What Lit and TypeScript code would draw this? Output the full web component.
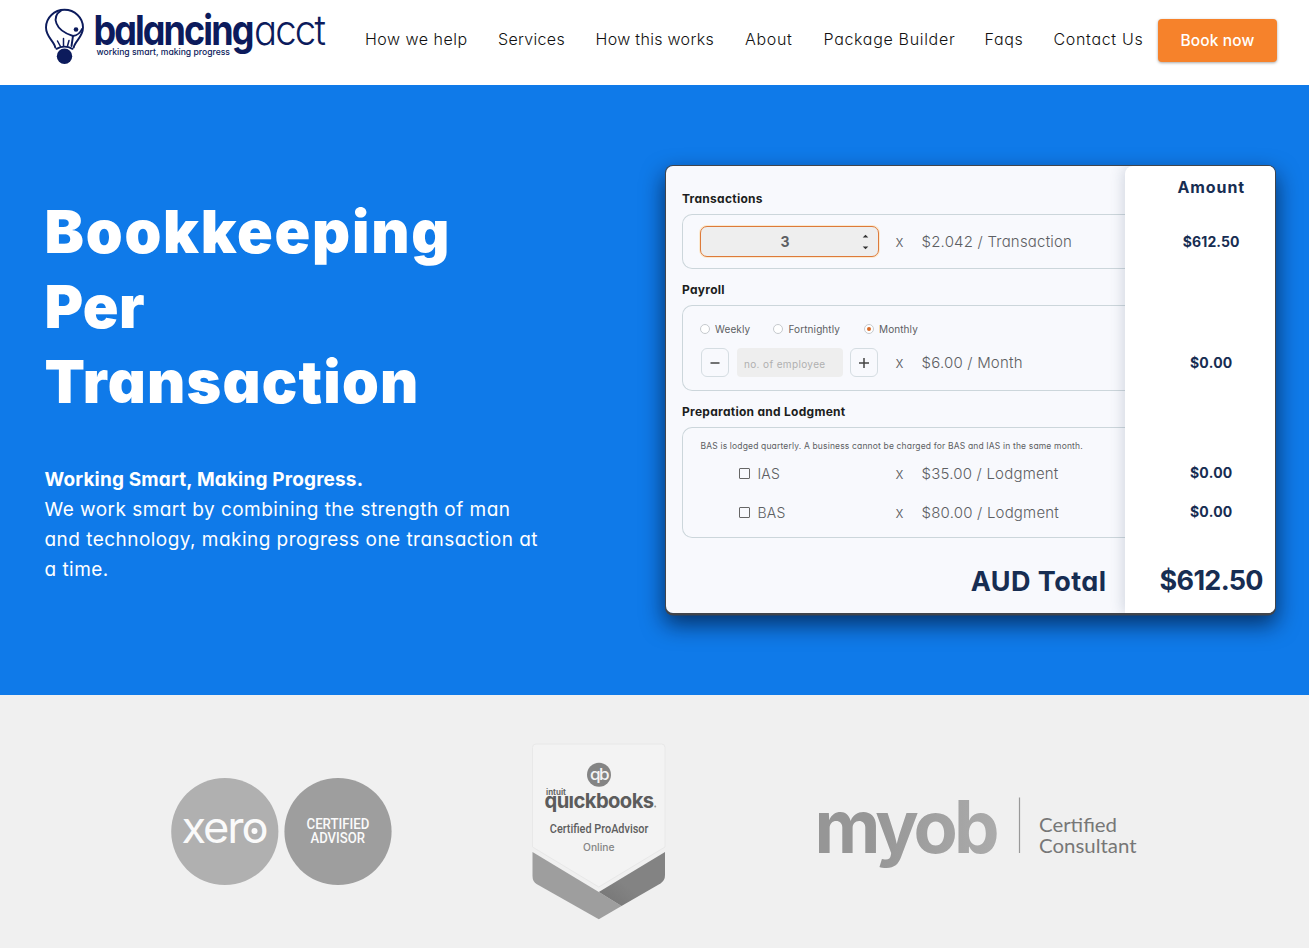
import { LitElement, html, css } from "lit";
import { customElement } from "lit/decorators.js";

@customElement("site-header")
export class SiteHeader extends LitElement {
  static styles = css`
    :host { display: block; height: 85px; background: #fff; }
    .bar { display: flex; align-items: flex-start; height: 85px; padding: 0 32px 0 40px; box-sizing: border-box; }
    .logo { display: block; width: 290px; height: 70px; flex: none; overflow: visible; }
    nav { display: grid; grid-template-columns: 103px 67.5px 119.5px 48.5px 131px 39px 90px; column-gap: 30px; margin: 24px 14.5px 0 35px; }
    a { font-size: 16px; line-height: 31px; font-weight: 330; letter-spacing: 0.5px; color: #111; white-space: nowrap; text-decoration: none; }
    .tight { letter-spacing: 0.31px; }
    .wide { letter-spacing: 0.68px; }
    .book { flex: none; width: 119px; height: 43px; margin-top: 19px; border: 0; padding: 0; border-radius: 4px; background: #f6822b; color: #fff; font: 500 15.5px/43px Inter, sans-serif; letter-spacing: 0.15px; box-shadow: 0 1px 3px rgba(0,0,0,.35); font-feature-settings: inherit; }
  `;
  render() {
    return html`
      <div class="bar">
        <svg class="logo" viewBox="40 0 290 70" font-family="Inter" fill="#0c1b5c">
          <g fill="none" stroke="#0c1b5c" stroke-width="1.9" stroke-linecap="round" stroke-linejoin="round">
            <path d="M55.300 47.500C54 41 46 37 46 27.500A18.500 17.700 0 0 1 83 27.500C83 37 75 41 73.700 47.500"/>
            <path d="M61.500 10.300C56.500 13.500 54.500 18.500 56.500 23.500C59 30 65 33.500 73 36L71.500 46"/>
            <path d="M73 36C77 35.500 80.500 32.500 82 29"/>
            <path d="M57.500 41L60.500 46.500M63.500 38.500V46M69 40.500L67.500 46" stroke-width="1.500"/>
            <path d="M56.500 48.800Q64.500 44.500 72.500 48.800"/>
          </g>
          <circle cx="76" cy="29.500" r="2.300"/>
          <circle cx="64.500" cy="56.300" r="7.700"/>
          <text x="93.500" y="45" font-size="41" font-weight="750" letter-spacing="-2.200" textLength="159" lengthAdjust="spacingAndGlyphs">balancing</text>
          <text x="254" y="45" font-size="41" font-weight="300" letter-spacing="-2" textLength="70" lengthAdjust="spacingAndGlyphs">acct</text>
          <text x="96.500" y="54.800" font-size="9" font-weight="550" textLength="133.500" lengthAdjust="spacingAndGlyphs">working smart, making progress</text>
        </svg>
        <nav>
          <a>How we help</a><a class="tight">Services</a><a class="tight">How this works</a><a class="wide">About</a><a class="wide">Package Builder</a><a class="wide">Faqs</a><a class="wide">Contact Us</a>
        </nav>
        <button class="book">Book now</button>
      </div>`;
  }
}

@customElement("price-card")
export class PriceCard extends LitElement {
  static styles = css`
    :host { display: block; }
    * { box-sizing: border-box; }
    .card { display: grid; grid-template-columns: 459px 150px; width: 609px; height: 447px; border-radius: 7px; background: #f8f9fd; overflow: hidden; color: #5d5f63; }
    .frame { width: 609px; border-radius: 7px; box-shadow: 0 0 0 1px #41454c, 0 1.500px 0 1px #41454c, 0 10px 22px 2px rgba(0,10,30,.62); }
    .left { padding: 25px 0 0 16px; }
    h3 { margin: 0 0 7px; padding-left: 0.500px; font-size: 12px; line-height: 16px; font-weight: 700; letter-spacing: 0.28px; color: #1c1d20; }
    .box { border: 1px solid #ccd6db; border-right: 0; border-radius: 10px 0 0 10px; margin-bottom: 13px; padding: 0 0 0 17px; }
    .b1 { height: 55px; padding-top: 11px; }
    .b2 { height: 86px; padding-top: 15px; }
    .b3 { height: 111px; padding-top: 11px; margin-bottom: 0; }
    .row { display: grid; grid-template-columns: 196px 26px 1fr; align-items: center; font-size: 15px; font-weight: 300; letter-spacing: 0.2px; white-space: nowrap; }
    .field { position: relative; display: grid; place-items: center; width: 179px; height: 31px; padding-right: 8px; border: 1.500px solid #dd7a3a; border-radius: 7px; background: #eee; font-size: 14px; font-weight: 700; box-shadow: 0 0 0 1px #fbe9cf; }
    .spin { position: absolute; right: 9px; top: 7px; width: 7px; height: 16px; }
    .radios { display: flex; align-items: center; height: 16px; font-size: 10px; font-weight: 400; letter-spacing: 0.100px; }
    .radio { display: flex; align-items: center; gap: 5.500px; white-space: nowrap; }
    .dot { width: 10px; height: 10px; border: 1px solid #c6cace; border-radius: 50%; display: grid; place-items: center; background: #fff; }
    .on::after { content: ""; width: 4px; height: 4px; border-radius: 50%; background: #d86a28; }
    .r1 { width: 73.500px; } .r2 { width: 90.500px; }
    .b2 .row { margin-top: 11px; height: 29px; }
    .step { display: flex; gap: 7px; padding-left: 1px; }
    .btn { width: 28px; height: 29px; border: 1px solid #d5dde2; border-radius: 6px; display: grid; place-items: center; }
    .btn svg { width: 10px; height: 10px; }
    .emp { width: 106px; height: 29px; border-radius: 4px; background: #eee; color: #b0b0b0; font-size: 10px; line-height: 32px; padding-left: 7.500px; letter-spacing: 0.36px; margin-left: 1px; font-weight: 400; }
    .note { font-size: 8.500px; line-height: 14px; letter-spacing: 0.16px; padding-left: 1px; white-space: nowrap; font-weight: 400; }
    .b3 .row { height: 38px; }
    .b3 .note + .row { height: 40px; }
    .check { display: flex; align-items: center; gap: 8px; padding-left: 39px; font-size: 14px; }
    .sq { width: 11px; height: 11px; border: 1.500px solid #666; border-radius: 1px; }
    .total { text-align: right; margin: 24px 18px 0 0; font-size: 27px; line-height: 40px; font-weight: 750; letter-spacing: 0.450px; color: #172d52; }
    .right { background: #fff; border-radius: 8px 0 0 0; box-shadow: -2px 0 14px rgba(60,80,110,.2); text-align: center; padding: 0 0 0 23.500px; color: #172d52; font-size: 14px; font-weight: 750; letter-spacing: 0.1px; }
    .head { font-size: 16px; line-height: 43px; letter-spacing: 0.900px; }
    .a1 { line-height: 66px; } .a2 { line-height: 176px; } .a3 { line-height: 44px; } .a4 { line-height: 34px; }
    .zero { letter-spacing: 0.250px; }
    .sum { font-size: 27px; line-height: 40px; margin-top: 32px; letter-spacing: -0.700px; }
  `;
  private lodgment(name: string, price: string) {
    return html`<div class="row"><span class="check"><i class="sq"></i>${name}</span><span>x</span><span>${price} / Lodgment</span></div>`;
  }
  render() {
    return html`<div class="frame"><div class="card">
      <div class="left">
        <h3>Transactions</h3>
        <div class="box b1"><div class="row">
          <div class="field">3<svg class="spin" viewBox="0 0 7 16" fill="#333"><path d="M.7 3.500 3.500.8 6.300 3.500zM.7 12.500 3.500 15.200 6.300 12.500z"/></svg></div>
          <span>x</span><span>$2.042 / Transaction</span></div></div>
        <h3>Payroll</h3>
        <div class="box b2">
          <div class="radios">
            <span class="radio r1"><i class="dot"></i>Weekly</span><span class="radio r2"><i class="dot"></i>Fortnightly</span><span class="radio"><i class="dot on"></i>Monthly</span>
          </div>
          <div class="row">
            <div class="step">
              <span class="btn"><svg viewBox="0 0 10 10" stroke="#444" stroke-width="1.500"><path d="M0.500 5h9"/></svg></span>
              <span class="emp">no. of employee</span>
              <span class="btn"><svg viewBox="0 0 10 10" stroke="#444" stroke-width="1.500"><path d="M0 5h10M5 0v10"/></svg></span>
            </div>
            <span>x</span><span>$6.00 / Month</span></div>
        </div>
        <h3>Preparation and Lodgment</h3>
        <div class="box b3">
          <div class="note">BAS is lodged quarterly. A business cannot be charged for BAS and IAS in the same month.</div>
          ${this.lodgment("IAS", "$35.00")}${this.lodgment("BAS", "$80.00")}
        </div>
        <div class="total">AUD Total</div>
      </div>
      <div class="right">
        <div class="head">Amount</div>
        <div class="a1">$612.50</div>
        <div class="a2 zero">$0.00</div>
        <div class="a3 zero">$0.00</div>
        <div class="a4 zero">$0.00</div>
        <div class="sum">$612.50</div>
      </div>
    </div></div>`;
  }
}

@customElement("partner-logos")
export class PartnerLogos extends LitElement {
  static styles = css`
    :host { display: block; height: 253px; background: #f0f0f0; }
    .row { display: flex; align-items: flex-start; padding-left: 170px; }
    svg { display: block; flex: none; overflow: visible; }
    .xero { width: 224px; height: 110px; margin-top: 82px; }
    .qb { width: 136px; height: 180px; margin: 47px 0 0 137px; }
    .myob { width: 330px; height: 110px; margin: 85px 0 0 143px; }
  `;
  render() {
    return html`<div class="row">
      <svg class="xero" viewBox="170 777 224 110" fill="#fafafa">
        <circle cx="224.800" cy="831.500" r="53.600" fill="#b0b0b0"/>
        <circle cx="338" cy="831.500" r="53.600" fill="#9e9e9e"/>
        <text x="181.500" y="842.500" font-family="Inter" font-weight="430" font-size="43" letter-spacing="-2" textLength="85" lengthAdjust="spacingAndGlyphs">xero</text>
        <circle cx="254.500" cy="831" r="3"/>
        <g font-family="Roboto" font-weight="500" font-size="14">
          <text x="306.500" y="829.400" textLength="63" lengthAdjust="spacingAndGlyphs">CERTIFIED</text>
          <text x="310.500" y="843.400" textLength="54.500" lengthAdjust="spacingAndGlyphs">ADVISOR</text>
        </g>
      </svg>
      <svg class="qb" viewBox="531 742 136 180">
        <defs><linearGradient id="fold" x1="0" x2="1" y1="1" y2="0"><stop offset="0" stop-color="#747474"/><stop offset=".4" stop-color="#838383"/></linearGradient></defs>
        <path d="M532.500 747.500Q532.500 744 536 744H661.500Q665 744 665 747.500V847L598.800 887 532.500 847Z" fill="#f3f3f3" stroke="#e8e8e8" stroke-width="1"/>
        <path d="M532.500 852 598.800 892 621.500 906 598.800 919.300 536.500 884Q532.500 881.500 532.500 876Z" fill="#9e9e9e"/>
        <path d="M665 852 598.800 892 621.500 906 660.500 883.500Q665 880.500 665 875Z" fill="url(#fold)"/>
        <circle cx="599" cy="774.700" r="12" fill="#848484"/>
        <text x="590" y="779.500" font-family="Inter" font-size="16" font-weight="500" fill="#f3f3f3" textLength="18" letter-spacing="-1.500" lengthAdjust="spacingAndGlyphs">qb</text>
        <text x="544.500" y="807.500" font-family="Inter" font-size="20.500" font-weight="700" fill="#5c5c5c" letter-spacing="-.6" textLength="109" lengthAdjust="spacingAndGlyphs">quickbooks</text>
        <path d="M567.500 789h6.500v6.300h-6.500z" fill="#f3f3f3"/>
        <text x="546" y="794.500" font-family="Inter" font-size="7.500" font-weight="700" fill="#666" textLength="20" lengthAdjust="spacingAndGlyphs">intuit</text>
        <circle cx="655.200" cy="806.500" r="1" fill="#999"/>
        <text x="549.800" y="832.700" font-family="Roboto" font-size="12.300" font-weight="500" fill="#5e5e5e" textLength="98.500" lengthAdjust="spacingAndGlyphs">Certified ProAdvisor</text>
        <text x="583" y="850.700" font-family="Inter" font-size="10" font-weight="500" fill="#858585" textLength="31.500" lengthAdjust="spacingAndGlyphs">Online</text>
      </svg>
      <svg class="myob" viewBox="810 780 330 110">
        <defs><linearGradient id="tone" x1="0" x2="1"><stop offset=".3" stop-color="#969696"/><stop offset="1" stop-color="#ababab"/></linearGradient></defs>
        <text x="814.500" y="853" font-family="Inter" font-size="73" font-weight="750" fill="url(#tone)" letter-spacing="-4" textLength="181" lengthAdjust="spacingAndGlyphs">myob</text>
        <path d="M1019.500 797.500V853" stroke="#999" stroke-width="1.200"/>
        <g font-family="Lato" font-size="19.500" fill="#777">
          <text x="1039" y="832" textLength="78" lengthAdjust="spacingAndGlyphs">Certified</text>
          <text x="1039" y="853" textLength="97.500" lengthAdjust="spacingAndGlyphs">Consultant</text>
        </g>
      </svg>
    </div>`;
  }
}

@customElement("app-root")
export class AppRoot extends LitElement {
  static styles = css`
    :host { display: block; width: 1309px; height: 948px; overflow: hidden; font-family: Inter, sans-serif; font-feature-settings: "cv11"; }
    .hero { display: flex; height: 610px; background: #0f7ae9; color: #fff; }
    .copy { width: 621px; padding: 109px 0 0 44.500px; flex: none; }
    h1 { margin: 0 0 46px; font-size: 59px; line-height: 75px; font-weight: 900; letter-spacing: 1.200px; }
    p { margin: 0; font-size: 19px; line-height: 30px; letter-spacing: 0.460px; white-space: nowrap; }
    strong { font-weight: 750; letter-spacing: 0.160px; }
    .first { letter-spacing: 1.800px; }
    .per { letter-spacing: 0.300px; }
    price-card { margin-top: 81px; }
  `;
  render() {
    return html`
      <site-header></site-header>
      <section class="hero">
        <div class="copy">
          <h1><span class="first">Bookkeeping</span><br><span class="per">Per</span><br>Transaction</h1>
          <p><strong>Working Smart, Making Progress.</strong><br>We work smart by combining the strength of man<br>and technology, making progress one transaction at<br>a time.</p>
        </div>
        <price-card></price-card>
      </section>
      <partner-logos></partner-logos>`;
  }
}
